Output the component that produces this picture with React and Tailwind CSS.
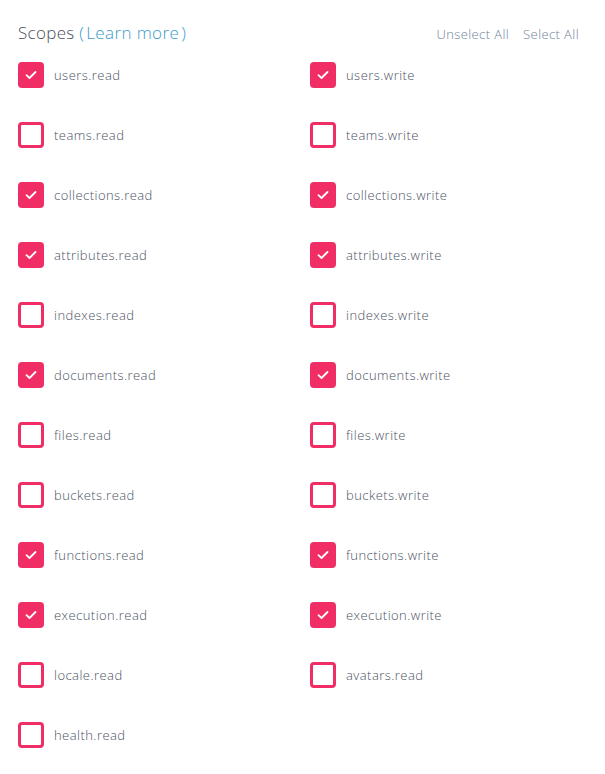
import React from "react";

const rows = [
  ["users.read", true, "users.write", true],
  ["teams.read", false, "teams.write", false],
  ["collections.read", true, "collections.write", true],
  ["attributes.read", true, "attributes.write", true],
  ["indexes.read", false, "indexes.write", false],
  ["documents.read", true, "documents.write", true],
  ["files.read", false, "files.write", false],
  ["buckets.read", false, "buckets.write", false],
  ["functions.read", true, "functions.write", true],
  ["execution.read", true, "execution.write", true],
  ["locale.read", false, "avatars.read", false],
  ["health.read", false],
];

function Box({ checked, label }) {
  return (
    <label className="flex items-center gap-[10px] h-[26px]">
      {checked ? (
        <span className="w-[26px] h-[26px] rounded-[4px] bg-[#f02e65] flex items-center justify-center shrink-0">
          <svg width="12" height="10" viewBox="0 0 12 10" fill="none">
            <path d="M1.5 5.2 L4.5 8 L10.5 2" stroke="white" strokeWidth="1.8" strokeLinecap="round" strokeLinejoin="round" />
          </svg>
        </span>
      ) : (
        <span className="w-[26px] h-[26px] rounded-[4px] border-[3px] border-[#f02e65] bg-white shrink-0" />
      )}
      <span className="text-[13px] text-[#4b5262] font-light tracking-[0.45px] pt-[1px]">{label}</span>
    </label>
  );
}

export default function App() {
  const items = [];
  rows.forEach((r) => {
    items.push({ label: r[0], checked: r[1] });
    if (r.length > 2) items.push({ label: r[2], checked: r[3] });
  });
  return (
    <div className="w-[605px] h-[774px] bg-white pl-[18px] pr-[26px] pt-[21px]" style={{ fontFamily: "'Open Sans', 'Liberation Sans', sans-serif" }}>
      <div className="flex items-center justify-between h-[24px]">
        <div className="text-[17px] text-[#4a4f5c] font-light tracking-[0.3px]">
          Scopes <span className="text-[#3b9bc8]">(</span>
          <span className="text-[#3b9bc8] tracking-[0.4px] px-[2px]">Learn more</span>
          <span className="text-[#3b9bc8]">)</span>
        </div>
        <div className="flex gap-[14px] text-[13px] text-[#6f849b] font-light tracking-[0.4px] pt-[4px]">
          <span>Unselect All</span>
          <span>Select All</span>
        </div>
      </div>
      <div className="grid grid-cols-2 gap-x-[23px] gap-y-[34px] mt-[17px]">
        {items.map((it) => (
          <Box key={it.label} {...it} />
        ))}
      </div>
    </div>
  );
}
